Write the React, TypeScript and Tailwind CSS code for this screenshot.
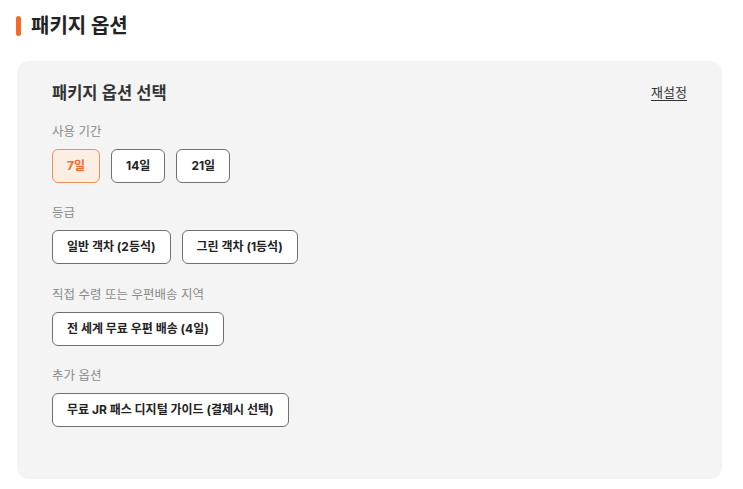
import React from "react";

const font = { fontFamily: 'Inter, "Noto Sans CJK KR", sans-serif' };

function Btn({ children, active = false }: { children: React.ReactNode; active?: boolean }) {
  return (
    <button
      className={
        active
          ? "h-[34px] px-[14px] rounded-[6px] border border-[#f0905c] bg-[#fdeee4] text-[#f0692a] text-[12px] font-bold"
          : "h-[34px] px-[14px] rounded-[6px] border border-[#707070] bg-white text-[#222222] text-[12px] font-bold"
      }
    >
      {children}
    </button>
  );
}

function Section({ label, children, top }: { label: string; children: React.ReactNode; top: string }) {
  return (
    <div className={top}>
      <div className="h-[20px] leading-[20px] text-[12.5px] text-[#8a8a8a]">{label}</div>
      <div className="mt-[7px] flex gap-[11px]">{children}</div>
    </div>
  );
}

export default function App() {
  return (
    <div className="w-[743px] h-[489px] bg-white pt-[11px]" style={font}>
      <div className="flex items-center gap-[10px] pl-[16px] h-[30px]">
        <div className="w-[5px] h-[20px] rounded-full bg-[#f26b2b]" />
        <div className="text-[20px] font-bold text-[#222222] leading-[30px]">패키지 옵션</div>
      </div>
      <div className="ml-[17px] mt-[20px] w-[705px] rounded-[12px] bg-[#f4f4f4] px-[35px] pt-[19px] pb-[52px]">
        <div className="flex items-center justify-between h-[26px]">
          <div className="text-[16.5px] font-semibold text-[#333333]">패키지 옵션 선택</div>
          <div className="text-[13px] text-[#333333] underline underline-offset-[3px]">재설정</div>
        </div>
        <Section label="사용 기간" top="mt-[16px]">
          <Btn active>7일</Btn>
          <Btn>14일</Btn>
          <Btn>21일</Btn>
        </Section>
        <Section label="등급" top="mt-[20px]">
          <Btn>일반 객차 (2등석)</Btn>
          <Btn>그린 객차 (1등석)</Btn>
        </Section>
        <Section label="직접 수령 또는 우편배송 지역" top="mt-[21px]">
          <Btn>전 세계 무료 우편 배송 (4일)</Btn>
        </Section>
        <Section label="추가 옵션" top="mt-[20px]">
          <Btn>무료 JR 패스 디지털 가이드 (결제시 선택)</Btn>
        </Section>
      </div>
    </div>
  );
}
